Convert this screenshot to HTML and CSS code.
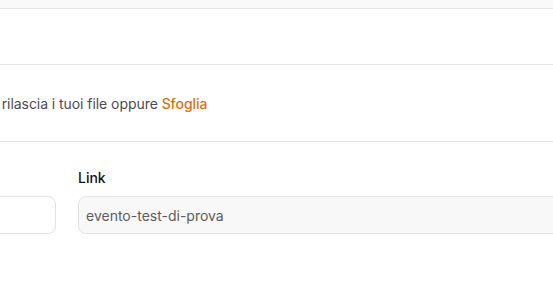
FILE: index.html
```html
<!DOCTYPE html>
<html lang="it">
<head>
    <meta charset="UTF-8">
    <meta name="viewport" content="width=device-width, initial-scale=1.0">
    <title>Evento</title>
    <link rel="stylesheet" href="styles.css">
</head>
<body>

<div class="topbar"></div>

<div class="section-empty"></div>

<div class="dropzone">
    <span class="drop-text">Trascina e rilascia i tuoi file oppure <a href="#" class="browse">Sfoglia</a></span>
</div>

<div class="fields">
    <div class="form-group">
        <label for="nome">Nome</label>
        <input type="text" id="nome" value="">
    </div>
    <div class="form-group">
        <label for="link">Link</label>
        <input type="text" id="link" class="readonly" value="evento-test-di-prova" readonly>
    </div>
</div>

</body>
</html>
```

FILE: styles.css
```css
/* Global Styles */
body {
    font-family: 'Inter', 'Liberation Sans', sans-serif;
    margin: 0;
    padding: 0;
    background-color: #ffffff;
    color: #111;
    overflow: hidden;
}

.topbar {
    height: 8px;
    background-color: #f9f9f9;
    border-bottom: 1px solid #e6e6e6;
}

.section-empty {
    height: 55px;
    border-bottom: 1px solid #e3e3e3;
}

/* Dropzone */
.dropzone {
    height: 76px;
    display: flex;
    align-items: center;
    border-bottom: 1px solid #e3e3e3;
    margin-left: -70px;
    white-space: nowrap;
}

.drop-text {
    font-size: 14px;
    letter-spacing: -0.06px;
    color: #4b4b52;
}

.browse {
    color: #d9700f;
    font-weight: 500;
    text-decoration: none;
}

/* Fields */
.fields {
    display: grid;
    grid-template-columns: 256px 1fr;
    column-gap: 22px;
    margin: 27px -200px 0 -200px;
}

.form-group {
    display: flex;
    flex-direction: column;
}

label {
    font-size: 14px;
    font-weight: 500;
    color: #111;
    margin-bottom: 9px;
    line-height: 18px;
}

input {
    height: 38px;
    box-sizing: border-box;
    padding: 0 8px 0 7px;
    font-family: inherit;
    font-size: 14px;
    color: #5c5c60;
    background-color: #ffffff;
    border: 1px solid #e2e2e2;
    border-radius: 8px;
    outline: none;
}

input.readonly {
    background-color: #f8f8f8;
}
```
